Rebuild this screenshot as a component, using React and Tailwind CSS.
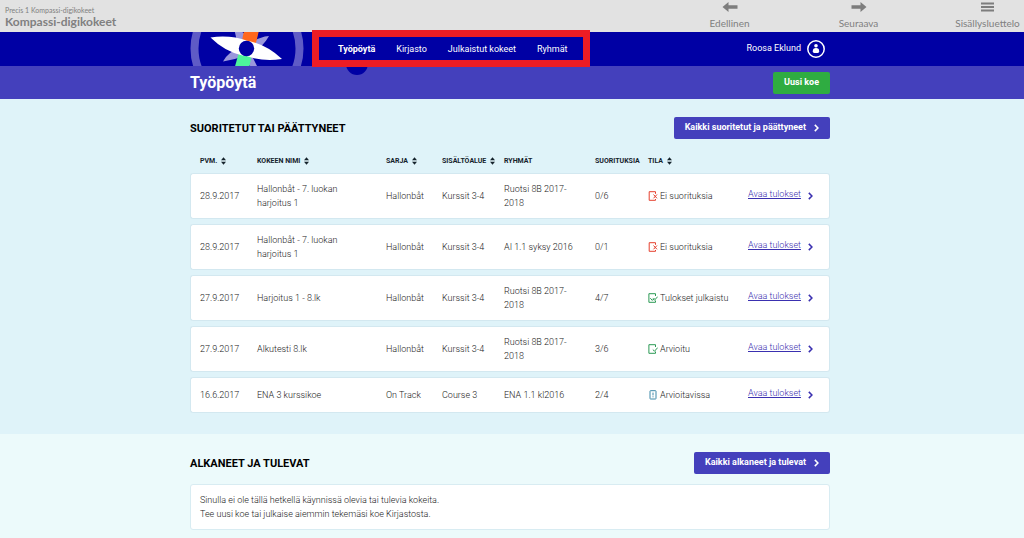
import { useState } from 'react'

const NAV_ITEMS = ['Työpöytä', 'Kirjasto', 'Julkaistut kokeet', 'Ryhmät']

const COLUMNS = [
  { key: 'date', label: 'Pvm.', sortable: true, width: 'w-[67px] pl-[10px]' },
  { key: 'name', label: 'Kokeen nimi', sortable: true, width: 'w-[129px]' },
  { key: 'series', label: 'Sarja', sortable: true, width: 'w-[56px]' },
  { key: 'content', label: 'Sisältöalue', sortable: true, width: 'w-[62px]' },
  { key: 'group', label: 'Ryhmät', sortable: false, width: 'w-[91px]' },
  { key: 'count', label: 'Suorituksia', sortable: false, width: 'w-[53px]' },
  { key: 'status', label: 'Tila', sortable: true, width: 'w-[100px]' },
]

const EXAMS = [
  { id: 1, date: '28.9.2017', name: 'Hallonbåt - 7. luokan harjoitus 1', series: 'Hallonbåt', content: 'Kurssit 3-4', group: 'Ruotsi 8B 2017-2018', count: '0/6', status: 'none' },
  { id: 2, date: '28.9.2017', name: 'Hallonbåt - 7. luokan harjoitus 1', series: 'Hallonbåt', content: 'Kurssit 3-4', group: 'AI 1.1 syksy 2016', count: '0/1', status: 'none' },
  { id: 3, date: '27.9.2017', name: 'Harjoitus 1 - 8.lk', series: 'Hallonbåt', content: 'Kurssit 3-4', group: 'Ruotsi 8B 2017-2018', count: '4/7', status: 'published' },
  { id: 4, date: '27.9.2017', name: 'Alkutesti 8.lk', series: 'Hallonbåt', content: 'Kurssit 3-4', group: 'Ruotsi 8B 2017-2018', count: '3/6', status: 'graded' },
  { id: 5, date: '16.6.2017', name: 'ENA 3 kurssikoe', series: 'On Track', content: 'Course 3', group: 'ENA 1.1 kl2016', count: '2/4', status: 'pending' },
]

const STATUS_LABELS = {
  none: 'Ei suorituksia',
  published: 'Tulokset julkaistu',
  graded: 'Arvioitu',
  pending: 'Arvioitavissa',
}

function Logo() {
  return (
    <svg className="w-[114px] h-[34px] shrink-0" viewBox="0 0 114 34" role="img" aria-label="Kompassi">
      <circle cx="57" cy="16.5" r="52.5" fill="none" stroke="#5f5bc6" strokeWidth="8" />
      <path d="M43 -8L64 10L50 22Z M79 4Q68 5 60 12L62 20Q73 15 79 4Z M33 29.5Q38 20 49 16L54 24Q44 28 33 29.5Z M60 20L71 42L55 30Z" fill="#9a97dc" />
      <path d="M54.5 -2H69Q67.500 6 65 14L52 10Q52.500 4 54.500 -2Z" fill="#ff671d" />
      <path d="M49 20L61.500 23Q61 30 58 38H44Z" fill="#4df59b" />
      <path d="M20.500 5.500Q40 2.500 58 9L54 24Q35 20 20.500 5.500Z M92 27Q72 30 55 23.500L59 9Q77 13 92 27Z" fill="#fff" />
      <circle cx="56.500" cy="16.500" r="7.700" fill="#0000a4" />
    </svg>
  )
}

function ArrowIcon({ className = '' }) {
  return (
    <svg className={`w-4 h-2.5 ${className}`} viewBox="0 0 16 10" fill="#7d7d7d" aria-hidden="true">
      <path d="M0.500 5L6.500 0V3.200H15.500V6.800H6.500V10Z" />
    </svg>
  )
}

function Chevron() {
  return (
    <svg className="w-[5px] h-[8px] shrink-0" viewBox="0 0 5 8" fill="none" stroke="currentColor" strokeWidth="1.500" aria-hidden="true">
      <path d="M0.800 0.900L3.900 4L0.800 7.100" />
    </svg>
  )
}

function SortIcon() {
  return (
    <svg className="w-[5px] h-[8px]" viewBox="0 0 5 8" fill="#14222b" aria-hidden="true">
      <path d="M2.500 0.300L5 3.200H0Z M0 4.800H5L2.500 7.700Z" />
    </svg>
  )
}

function StatusIcon({ status }) {
  if (status === 'none') {
    return (
      <svg className="w-[10px] h-[10px] shrink-0" viewBox="0 0 10 10" fill="none" stroke="#e5402f" aria-hidden="true">
        <path d="M7.500 2.800V0.700H1.200V9.300H7.500V8" />
        <path d="M5.500 3.500L9 7.300M9 3.500L5.500 7.300" />
      </svg>
    )
  }
  if (status === 'pending') {
    return (
      <svg className="w-[10px] h-[10px] shrink-0" viewBox="0 0 10 10" fill="none" stroke="#3c88a8" aria-hidden="true">
        <rect x="2" y="0.700" width="6" height="8.300" rx="0.500" />
        <path d="M5 2.600V5.400M5 6.300V7.300" />
      </svg>
    )
  }
  return (
    <svg className="w-[10px] h-[10px] shrink-0" viewBox="0 0 10 10" fill="none" stroke="#2c9a55" aria-hidden="true">
      <path d="M7.500 3V0.700H0.900V9.300H7.500V7.500" />
      <path d="M4.800 5.600L6.500 7.200L9.700 3.600" />
      {status === 'published' && <path d="M2.300 5.200L4.300 7.400L6.500 5" />}
    </svg>
  )
}

function UserIcon() {
  return (
    <svg className="w-[18px] h-[18px]" viewBox="0 0 18 18" aria-hidden="true">
      <circle cx="9" cy="9" r="8.200" fill="none" stroke="#fff" strokeWidth="1.500" />
      <circle cx="9" cy="5.800" r="1.800" fill="#fff" />
      <path d="M5.800 11.200Q5.800 8 9 8T12.200 11.200Q12.200 13 10.800 13H7.200Q5.800 13 5.800 11.200Z" fill="#fff" />
    </svg>
  )
}

function SectionHeader({ title, action }) {
  return (
    <div className="flex items-center justify-between">
      <h2 className="pt-[2px] text-[11px] leading-[14px] font-bold uppercase text-black">{title}</h2>
      <button className="flex items-center gap-2 h-[22px] px-[11px] rounded-[2px] bg-[#4440bc] text-white text-[9px] font-bold">
        {action}
        <Chevron />
      </button>
    </div>
  )
}

export default function App() {
  const [active, setActive] = useState('Työpöytä')

  return (
    <div className="min-h-screen flex flex-col bg-[#ecfafb] font-['Roboto',sans-serif]">
      {/* Viewer bar */}
      <div className="flex justify-between h-8 pl-[5px] pr-1 bg-[#e2e2e2] text-[#808080] font-['Lato',sans-serif]">
        <div className="pt-[6px]">
          <p className="text-[7px] leading-[9px]">Precis 1 Kompassi-digikokeet</p>
          <p className="text-[12px] leading-[14px] font-bold">Kompassi-digikokeet</p>
        </div>
        <div className="flex gap-16 text-[10px] leading-[14px]">
          <button className="w-[65px] flex flex-col items-center gap-1 pt-[2px]">
            <ArrowIcon />
            Edellinen
          </button>
          <button className="w-[65px] flex flex-col items-center gap-1 pt-[2px]">
            <ArrowIcon className="rotate-180" />
            Seuraava
          </button>
          <button className="w-[65px] flex flex-col items-center gap-1 pt-[2px]">
            <svg className="w-[13px] h-2.5" viewBox="0 0 13 10" fill="#7d7d7d" aria-hidden="true">
              <path d="M0 0.500H13V2.500H0Z M0 4H13V6H0Z M0 7.500H13V9.500H0Z" />
            </svg>
            Sisällysluettelo
          </button>
        </div>
      </div>

      {/* Main navigation */}
      <header className="bg-[#0000a4] pr-1">
        <div className="max-w-[640px] h-[34px] mx-auto flex items-center">
          <Logo />
          <nav className="relative ml-[34px] flex gap-[21px] text-[9px] leading-[14px] text-white">
            {NAV_ITEMS.map(item => (
              <a
                key={item}
                href="#"
                onClick={() => setActive(item)}
                className={`relative ${item === active ? 'font-bold' : ''}`}
              >
                {item}
                {item === active && (
                  <span className="absolute left-1/2 -translate-x-1/2 top-[11px] w-[22px] h-[22px] rounded-full bg-[#0000a4] [clip-path:inset(11px_0_0_0)]" />
                )}
              </a>
            ))}
            <span className="absolute -left-[26px] -right-[23px] -top-[12px] -bottom-[11px] border-[7px] border-[#ed1c24] pointer-events-none" />
          </nav>
          <div className="ml-auto pr-[5px] flex items-center gap-[6px] text-[9px] text-white">
            Roosa Eklund
            <UserIcon />
          </div>
        </div>
      </header>

      {/* Page title */}
      <div className="bg-[#4440bc] pr-1">
        <div className="max-w-[640px] h-[33px] mx-auto flex items-center justify-between">
          <h1 className="text-[16px] leading-5 font-bold text-white">Työpöytä</h1>
          <button className="h-[22px] px-[11px] rounded-[2px] bg-[#2fac41] text-white text-[9px] font-bold">Uusi koe</button>
        </div>
      </div>

      <main className="flex-1">
        <section className="bg-[#dff3f9] pt-[18px] pb-4 pr-1">
          <div className="max-w-[640px] mx-auto">
            <SectionHeader title="Suoritetut tai päättyneet" action="Kaikki suoritetut ja päättyneet" />

            <table className="w-full mt-[10px] table-fixed border-separate border-spacing-x-0 border-spacing-y-[5px] text-left">
              <thead>
                <tr className="text-[7px] leading-[14px] text-[#14222b]">
                  {COLUMNS.map(col => (
                    <th key={col.key} className={`p-0 font-bold whitespace-nowrap ${col.width}`}>
                      {col.sortable ? (
                        <button className="flex items-center gap-1 uppercase">
                          {col.label}
                          <SortIcon />
                        </button>
                      ) : (
                        <span className="block uppercase">{col.label}</span>
                      )}
                    </th>
                  ))}
                  <th className="p-0" aria-label="Tulokset" />
                </tr>
              </thead>
              <tbody className="text-[9px] leading-[14px] font-light text-[#222]">
                {EXAMS.map(exam => (
                  <tr key={exam.id} className="h-9 *:bg-white *:border-y *:border-[#d3e8f0] *:py-2">
                    <td className="pl-[9px] border-l rounded-l-[3px]">{exam.date}</td>
                    <td className="pr-10">{exam.name}</td>
                    <td>{exam.series}</td>
                    <td>{exam.content}</td>
                    <td className="pr-4">{exam.group}</td>
                    <td>{exam.count}</td>
                    <td>
                      <div className="flex items-center gap-[2px] whitespace-nowrap">
                        <StatusIcon status={exam.status} />
                        {STATUS_LABELS[exam.status]}
                      </div>
                    </td>
                    <td className="border-r rounded-r-[3px]">
                      <div className="flex items-center gap-[7px] whitespace-nowrap text-[#3a30b0]">
                        <a href="#" className="pb-1 -mt-px underline">Avaa tulokset</a>
                        <Chevron />
                      </div>
                    </td>
                  </tr>
                ))}
              </tbody>
            </table>
          </div>
        </section>

        <section className="pt-[18px] pb-2 pr-1">
          <div className="max-w-[640px] mx-auto">
            <SectionHeader title="Alkaneet ja tulevat" action="Kaikki alkaneet ja tulevat" />
            <div className="mt-[10px] px-[9px] py-2 bg-white border border-[#d8ecf2] rounded-[3px] text-[9px] leading-[14px] font-light text-[#222]">
              <p>Sinulla ei ole tällä hetkellä käynnissä olevia tai tulevia kokeita.</p>
              <p>Tee uusi koe tai julkaise aiemmin tekemäsi koe Kirjastosta.</p>
            </div>
          </div>
        </section>
      </main>
    </div>
  )
}
